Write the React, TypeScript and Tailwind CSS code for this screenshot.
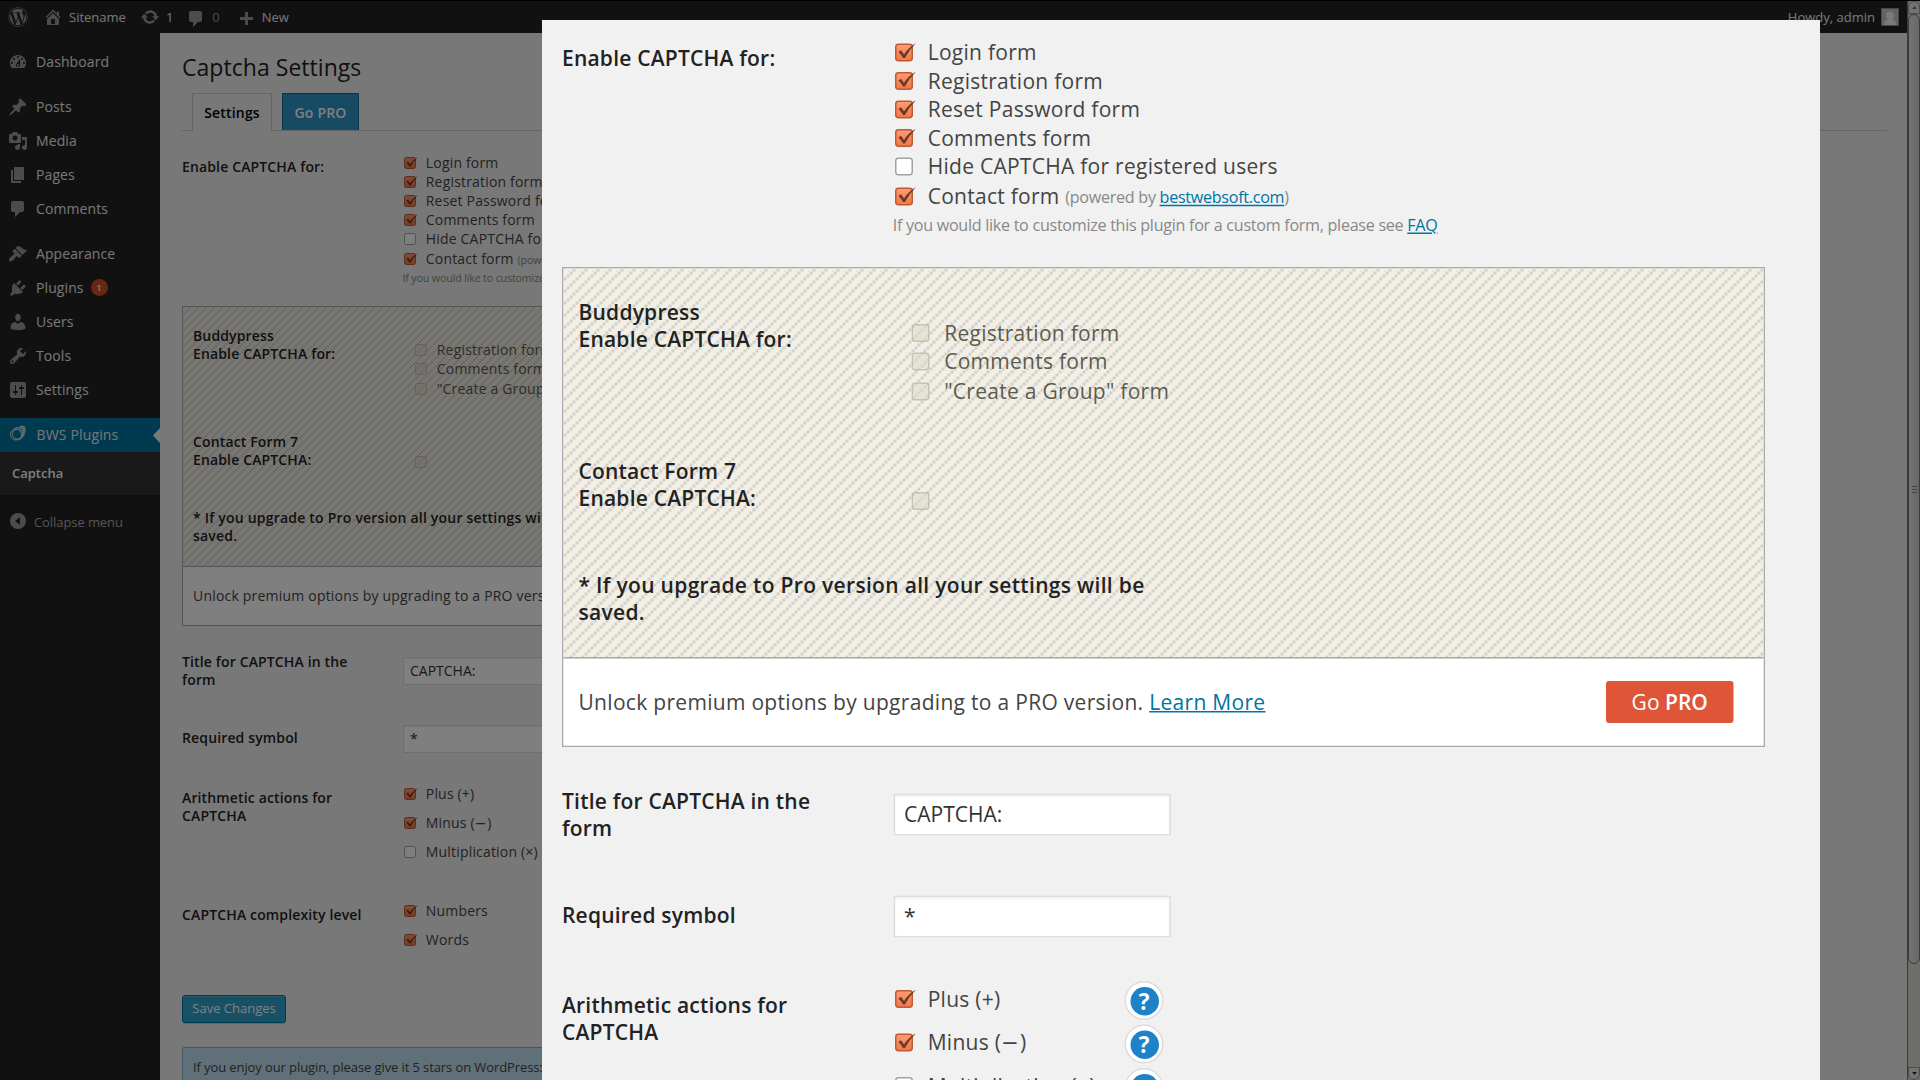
import React, { useId } from "react";
import { FaWordpress } from "react-icons/fa";

function Icon({ d, className }: { d: string; className: string }) {
  return (
    <svg viewBox="0 0 20 20" fill="currentColor" className={className}>
      <path d={d} />
    </svg>
  );
}

const icons = {
  home: "M16 8.5l1.53 1.53-1.06 1.06L10 4.6l-6.47 6.49-1.06-1.06L10 2.5l4 4v-2h2v4zm-6-2.46l6 5.99V18H4v-5.97zM12 17v-5H8v5h4z",
  update:
    "M10.2 3.28c3.53 0 6.43 2.61 6.92 6h2.08l-3.5 4-3.5-4h2.32c-.45-1.97-2.21-3.45-4.32-3.45-1.45 0-2.73.71-3.54 1.78L4.95 5.66C6.23 4.2 8.11 3.28 10.2 3.28zm-.4 13.44c-3.52 0-6.43-2.61-6.92-6H.8l3.5-4c1.17 1.33 2.33 2.67 3.5 4H5.48c.45 1.97 2.21 3.45 4.32 3.45 1.45 0 2.73-.71 3.54-1.78l1.71 1.95c-1.28 1.46-3.15 2.38-5.25 2.38z",
  comments: "M5 2h9c1.1 0 2 .9 2 2v7c0 1.1-.9 2-2 2h-2l-5 5v-5H5c-1.1 0-2-.9-2-2V4c0-1.1.9-2 2-2z",
  plus: "M17 7v3h-5v5H9v-5H4V7h5V2h3v5h5z",
  dashboard:
    "M3.76 16h12.48c1.1-1.37 1.76-3.11 1.76-5 0-4.42-3.58-8-8-8s-8 3.58-8 8c0 1.89.66 3.63 1.76 5zM10 4c.55 0 1 .45 1 1s-.45 1-1 1-1-.45-1-1 .45-1 1-1zM6 6c.55 0 1 .45 1 1s-.45 1-1 1-1-.45-1-1 .45-1 1-1zm8 0c.55 0 1 .45 1 1s-.45 1-1 1-1-.45-1-1 .45-1 1-1zm-5.37 5.55L12 7v6c0 1.1-.9 2-2 2s-2-.9-2-2c0-.57.24-1.08.63-1.45zM4 10c.55 0 1 .45 1 1s-.45 1-1 1-1-.45-1-1 .45-1 1-1zm12 0c.55 0 1 .45 1 1s-.45 1-1 1-1-.45-1-1 .45-1 1-1zm-5 3c0-.55-.45-1-1-1s-1 .45-1 1 .45 1 1 1 1-.45 1-1z",
  post: "M10.44 3.02l1.82-1.82 6.36 6.35-1.83 1.82c-1.05-.68-2.48-.57-3.41.36l-.75.75c-.92.93-1.04 2.35-.35 3.41l-1.83 1.82-2.41-2.41-2.8 2.79c-.42.42-3.38 2.71-3.8 2.29s1.86-3.39 2.28-3.81l2.79-2.79L4.1 9.36l1.83-1.82c1.05.69 2.48.57 3.4-.36l.75-.75c.93-.92 1.05-2.35.36-3.41z",
  media:
    "M13 11V4c0-.55-.45-1-1-1h-1.67L9 1H5L3.67 3H2c-.55 0-1 .45-1 1v7c0 .55.45 1 1 1h10c.55 0 1-.45 1-1zM7 4.5c1.38 0 2.5 1.12 2.5 2.5S8.38 9.5 7 9.5 4.5 8.38 4.5 7 5.62 4.5 7 4.5zM14 6h5v10.5c0 1.38-1.12 2.5-2.5 2.5S14 17.88 14 16.5s1.12-2.5 2.5-2.5c.17 0 .34.02.5.05V9h-3V6zm-4 8.05V13h2v3.5c0 1.38-1.12 2.5-2.5 2.5S7 17.88 7 16.5 8.12 14 9.5 14c.17 0 .34.02.5.05z",
  page: "M6 15V2h10v13H6zm-1 1h8v2H3V5h2v11z",
  appearance:
    "M14.48 11.06L7.41 3.99l1.5-1.5c.5-.56 2.3-.47 3.51.32 1.21.8 1.43 1.28 2.91 2.1 1.18.64 2.45 1.26 4.45.85zm-.71.71L6.7 4.7 4.93 6.47c-.39.39-.39 1.02 0 1.41l1.06 1.06c.39.39.39 1.03 0 1.42-.6.6-1.43 1.11-2.21 1.69-.35.26-.7.53-1.01.84C1.43 14.23.4 16.08 1.4 17.07c.99 1 2.84-.03 4.18-1.36.31-.31.58-.66.85-1.02.57-.78 1.08-1.61 1.69-2.21.39-.39 1.02-.39 1.41 0l1.06 1.06c.39.39 1.02.39 1.41 0z",
  plugins:
    "M13.11 4.36L9.87 7.6 8 5.73l3.24-3.24c.35-.34 1.05-.2 1.56.32.52.51.66 1.21.31 1.55zm-8 1.77l.91-1.12 9.01 9.01-1.19.84c-.71.71-2.63 1.16-3.82 1.16H6.14L4.9 17.26c-.59.59-1.54.59-2.12 0-.59-.58-.59-1.53 0-2.12l1.24-1.24v-3.88c0-1.13.4-3.19 1.09-3.89zm7.26 3.97l3.24-3.24c.34-.35 1.04-.21 1.55.31.52.51.66 1.21.31 1.55l-3.24 3.25z",
  users:
    "M10 9.25c-2.27 0-2.73-3.44-2.73-3.44C7 4.02 7.82 2 9.97 2c2.16 0 2.98 2.02 2.71 3.81 0 0-.41 3.44-2.68 3.44zm0 2.57L12.72 10c2.39 0 4.52 2.33 4.52 4.53v2.49s-3.65 1.13-7.24 1.13c-3.65 0-7.24-1.13-7.24-1.13v-2.49c0-2.25 1.94-4.48 4.47-4.48z",
  tools:
    "M16.68 9.77c-1.34 1.34-3.3 1.67-4.95.99l-5.41 6.52c-.99.99-2.59.99-3.58 0s-.99-2.59 0-3.57l6.52-5.42c-.68-1.65-.35-3.61.99-4.95 1.28-1.28 3.12-1.62 4.72-1.06l-2.89 2.89 2.82 2.82 2.86-2.87c.53 1.58.18 3.39-1.08 4.65zM3.81 16.21c.4.39 1.04.39 1.43 0 .4-.4.4-1.04 0-1.43-.39-.4-1.03-.4-1.43 0-.39.39-.39 1.03 0 1.43z",
  settings:
    "M18 16V4c0-1.1-.9-2-2-2H4c-1.1 0-2 .9-2 2v12c0 1.1.9 2 2 2h12c1.1 0 2-.9 2-2zM8 11h1c.55 0 1 .45 1 1s-.45 1-1 1H8v1.5c0 .28-.22.5-.5.5s-.5-.22-.5-.5V13H6c-.55 0-1-.45-1-1s.45-1 1-1h1V5.5c0-.28.22-.5.5-.5s.5.22.5.5V11zm5-2h-1c-.55 0-1-.45-1-1s.45-1 1-1h1V5.5c0-.28.22-.5.5-.5s.5.22.5.5V7h1c.55 0 1 .45 1 1s-.45 1-1 1h-1v5.5c0 .28-.22.5-.5.5s-.5-.22-.5-.5V9z",
};

function AdminBar() {
  return (
    <header className="flex h-8 items-center bg-[#222] pl-2 pr-2 text-[13px] text-[#eee]">
      <FaWordpress className="h-5 w-5 text-[#999]" />
      <Icon d={icons.home} className="ml-[15px] h-5 w-5 text-[#999]" />
      <span className="ml-[6px] mt-px">Sitename</span>
      <Icon d={icons.update} className="ml-[14px] h-5 w-5 text-[#999]" />
      <span className="ml-[6px] mt-px">1</span>
      <Icon d={icons.comments} className="ml-[13px] mt-[3px] h-5 w-5 text-[#999]" />
      <span className="ml-[6px] mt-px text-[#999]">0</span>
      <Icon d={icons.plus} className="ml-[16px] mt-[5px] h-5 w-5 text-[#999]" />
      <span className="ml-[6px] mt-px">New</span>
      <span className="ml-auto mt-px">Howdy, admin</span>
      <svg viewBox="0 0 18 18" className="ml-[6px] h-[18px] w-[18px]">
        <rect x="0.5" y="0.5" width="17" height="17" fill="#c8c8c8" stroke="#8c8c8c" />
        <circle cx="9" cy="7.5" r="4" fill="#f4f4f4" />
        <path d="M3 17c0-4 2.500-6 6-6s6 2 6 6z" fill="#f4f4f4" />
      </svg>
    </header>
  );
}

function MenuItem({ icon, label, badge }: { icon: string; label: string; badge?: string }) {
  return (
    <li className="flex h-[34px] items-center pb-[2px] pl-2 text-[14px] tracking-[0.1px] text-[#eee]">
      <Icon d={icon} className="mt-[2px] h-5 w-5 text-[#999]" />
      <span className="ml-2">{label}</span>
      {badge && (
        <span className="ml-[7px] mt-px flex h-[17px] w-[17px] items-center justify-center rounded-full bg-[#d54e21] text-[9px] font-semibold text-white">
          {badge}
        </span>
      )}
    </li>
  );
}

function Sidebar() {
  return (
    <nav className="w-40 shrink-0 bg-[#222] pt-3">
      <ul>
        <MenuItem icon={icons.dashboard} label="Dashboard" />
      </ul>
      <ul className="mt-[11px]">
        <MenuItem icon={icons.post} label="Posts" />
        <MenuItem icon={icons.media} label="Media" />
        <MenuItem icon={icons.page} label="Pages" />
        <MenuItem icon={icons.comments} label="Comments" />
      </ul>
      <ul className="mt-[11px]">
        <MenuItem icon={icons.appearance} label="Appearance" />
        <MenuItem icon={icons.plugins} label="Plugins" badge="1" />
        <MenuItem icon={icons.users} label="Users" />
        <MenuItem icon={icons.tools} label="Tools" />
        <MenuItem icon={icons.settings} label="Settings" />
      </ul>
      <div className="mt-[11px] flex h-[34px] items-center bg-[#0074a2] pl-[10px] text-[14px] tracking-[0.15px] text-[#eee]">
        <svg viewBox="0 0 16 17" fill="none" stroke="#dce8ee" className="mb-1 h-[17px] w-4">
          <circle cx="6" cy="9.500" r="5.500" strokeWidth="1" />
          <circle cx="7.500" cy="9" r="5" strokeWidth=".9" />
          <path d="M9.500 1.300C11.500.6 14 .8 15 2c1.300 4.500-.5 9.500-5.500 13 2.500-3 3.800-6.300 3-9C12 4 11 2.500 9.500 1.300z" fill="#dce8ee" fillOpacity=".8" strokeWidth=".5" />
          <path d="M3.500 4.500C5.500 2.300 8.500 2 11 3.500" strokeWidth="1" />
        </svg>
        <span className="-mt-[2px] ml-[10.500px]">BWS Plugins</span>
        <svg viewBox="0 0 7 15" className="ml-auto h-[15px] w-[7px]">
          <path d="M7 0v15L0 7.500z" fill="#f1f1f1" />
        </svg>
      </div>
      <div className="flex h-[43px] items-center bg-[#333] pl-3 text-[13px] font-semibold text-white">Captcha</div>
      <div className="mt-[11px] flex h-[34px] items-center pl-[10px] text-[13px] tracking-[-0.08px] text-[#aaa]">
        <svg viewBox="0 0 16 16" className="mb-[4px] h-4 w-4">
          <circle cx="8" cy="8" r="8" fill="#999" />
          <path d="M10 4v8L5 8z" fill="#222" />
        </svg>
        <span className="ml-[8px]">Collapse menu</span>
      </div>
    </nav>
  );
}

function Box({ checked = false, disabled = false }: { checked?: boolean; disabled?: boolean }) {
  const id = useId();
  return (
    <svg viewBox="0 0 15 14" className="h-[14px] w-[15px] shrink-0">
      <defs>
        <linearGradient id={id} x1="0" y1="0" x2="0" y2="1">
          <stop offset="0" stopColor="#ff9c72" />
          <stop offset="1" stopColor="#f07746" />
        </linearGradient>
      </defs>
      {disabled ? (
        <rect x="0.5" y="1.500" width="11" height="11" rx="1.800" fill="#dedac8" fillOpacity=".5" stroke="#bdbaae" strokeOpacity=".8" />
      ) : (
        <rect
          x="0.5"
          y="1.500"
          width="11"
          height="11"
          rx="1.800"
          fill={checked ? `url(#${id})` : "#fff"}
          stroke={checked ? "#bf5b33" : "#a5a29e"}
        />
      )}
      {checked && <path d="M2.300 6.600l1.700-1.100 2 2.800Q9 3.600 13.900.9 9.500 5.400 6.600 10.600H5.400Q4.300 8.600 2.300 6.600z" fill="#6b3a2a" />}
    </svg>
  );
}

function Check({ label, checked, disabled, className }: { label: React.ReactNode; checked?: boolean; disabled?: boolean; className: string }) {
  return (
    <label className={`flex items-center gap-[7px] whitespace-nowrap pl-[0.800px] tracking-[0.18px] ${className}`}>
      <Box checked={checked} disabled={disabled} />
      <span>{label}</span>
    </label>
  );
}

function Hatch() {
  const id = useId();
  return (
    <svg className="absolute inset-0 h-full w-full">
      <defs>
        <pattern id={id} width="8" height="8" patternUnits="userSpaceOnUse">
          <path d="M0 6h2v2H0zM2 4h2v2H2zM4 2h2v2H4zM6 0h2v2H6z" fill="#d0d0d2" />
        </pattern>
      </defs>
      <rect width="100%" height="100%" fill={`url(#${id})`} />
    </svg>
  );
}

function Help() {
  return (
    <span className="flex h-[26px] w-[26px] items-center justify-center rounded-full border border-[#dcdcdc] bg-white">
      <span className="flex h-[19px] w-[19px] items-center justify-center rounded-full bg-[#1e82c8] text-[15px] font-bold leading-none text-white">?</span>
    </span>
  );
}

function Field({ value }: { value: string }) {
  return (
    <div className="flex h-[28px] w-[185px] items-center border border-[#ddd] bg-white pb-[1.500px] pl-[6px] text-[#333] shadow-[inset_0_1px_2px_rgba(0,0,0,0.07)]">
      {value}
    </div>
  );
}

const heading = "font-semibold leading-[18px] tracking-[0.14px] text-[#222]";
const link = "text-[#0074a2] underline";
const hint = "text-[10.750px] tracking-[-0.190px] text-[#888]";

function SettingsForm() {
  return (
    <form className="w-[802px] text-[14px] text-[#444]">
      <section className="flex h-[162px]">
        <h3 className={`w-[221px] pt-[14px] ${heading}`}>Enable CAPTCHA for:</h3>
        <div className="pt-[9px]">
          <Check className="h-[19px]" checked label="Login form" />
          <Check className="h-[19px]" checked label="Registration form" />
          <Check className="h-[19px]" checked label="Reset Password form" />
          <Check className="h-[19px]" checked label="Comments form" />
          <Check className="h-[19px]" label="Hide CAPTCHA for registered users" />
          <Check
            className="h-[21px]"
            checked
            label={
              <>
                Contact form{" "}
                <span className={`inline-block -translate-y-[0.500px] ${hint}`}>
                  (powered by <a className={link}>bestwebsoft.com</a>)
                </span>
              </>
            }
          />
          <p className={`-ml-[0.500px] flex h-[18px] items-center whitespace-pre ${hint}`}>
            If you would like to customize this plugin for a custom form, please see <a className={link}>FAQ</a>
          </p>
        </div>
      </section>

      <section className="h-[320px] border border-[#aaa]">
        <div className="relative h-[260px] border-b border-[#aaa] bg-[#f3efe3]">
          <Hatch />
          <div className="relative pl-[10px] pt-5">
            <div className="flex h-[106px]">
              <h3 className={`w-[221px] ${heading}`}>
                Buddypress
                <br />
                Enable CAPTCHA for:
              </h3>
              <div className="pt-[13px] text-[#5c5b50] [&_svg]:mt-[1.600px]">
                <Check className="h-[19px]" disabled label="Registration form" />
                <Check className="h-[19px]" disabled label="Comments form" />
                <Check className="h-[20px]" disabled label={'"Create a Group" form'} />
              </div>
            </div>
            <div className="flex h-[76px]">
              <h3 className={`w-[221px] ${heading}`}>
                Contact Form 7
                <br />
                Enable CAPTCHA:
              </h3>
              <div className="pl-[0.800px] pt-[22px]">
                <Box disabled />
              </div>
            </div>
            <p className="w-[400px] font-semibold leading-[18px] tracking-[0.21px] text-[#222]">* If you upgrade to Pro version all your settings will be saved.</p>
          </div>
        </div>
        <div className="flex h-[58px] items-center justify-between bg-white pl-[10px] pr-[20px]">
          <span className="-mt-[1.500px] tracking-[0.2px]">
            Unlock premium options by upgrading to a PRO version. <a className={link}>Learn More</a>
          </span>
          <span className="flex h-7 w-[85px] items-center justify-center whitespace-pre rounded-[2px] bg-[#de5537] pb-px text-white">
            Go <b className="font-semibold">PRO</b>
          </span>
        </div>
      </section>

      <section className="flex h-[68px] pt-[27px]">
        <h3 className={`w-[221px] pr-[40px] ${heading}`}>Title for CAPTCHA in the form</h3>
        <div className="pt-[4px]">
          <Field value="CAPTCHA:" />
        </div>
      </section>
      <section className="flex h-[90px] pt-[31px]">
        <h3 className={`w-[221px] pt-[4px] ${heading}`}>Required symbol</h3>
        <Field value="*" />
      </section>
      <section className="flex h-[90px]">
        <h3 className={`w-[221px] pr-[40px] pt-[5px] ${heading}`}>Arithmetic actions for CAPTCHA</h3>
        <div className="-mt-[5px] w-[154px]">
          <Check className="h-[29px]" checked label="Plus (+)" />
          <Check
            className="h-[29px]"
            checked
            label={
              <>
                Minus (<span className="font-['DejaVu_Sans'] leading-none tracking-[0.8px]">−</span>)
              </>
            }
          />
          <Check className="h-[29px]" label="Multiplication (×)" />
        </div>
        <div className="-mt-[2px] flex flex-col gap-[3px]">
          <Help />
          <Help />
          <Help />
        </div>
      </section>
      <section className="flex h-[118px] pt-[22px]">
        <h3 className={`w-[221px] pt-[10px] ${heading}`}>CAPTCHA complexity level</h3>
        <div>
          <Check className="h-[29px]" checked label="Numbers" />
          <Check className="h-[29px]" checked label="Words" />
        </div>
      </section>
      <button
        type="button"
        className="mt-[3px] flex h-[28px] w-[104px] items-center justify-center rounded-[3px] border border-[#0074a2] bg-[#2ea2cc] text-[13px] text-white shadow-[inset_0_1px_0_rgba(120,200,230,0.5),0_1px_0_rgba(0,0,0,0.15)]"
      >
        Save Changes
      </button>
    </form>
  );
}

function Scrollbar() {
  return (
    <div className="flex w-[13px] shrink-0 flex-col items-center border-l border-[#777] bg-[#dcdad5]">
      <div className="flex h-[13px] w-full items-center justify-center rounded-t-full border border-[#999] bg-[#e6e6e6]">
        <svg viewBox="0 0 6 4" className="h-[3px] w-[5px]">
          <path d="M3 0l3 4H0z" fill="#666" />
        </svg>
      </div>
      <div className="flex h-[950px] w-full flex-col items-center justify-center gap-[2px] rounded-full border border-[#777] bg-linear-to-r from-[#e8e8e8] to-[#cfcdc9]">
        <i className="h-px w-[5px] bg-[#888]" />
        <i className="h-px w-[5px] bg-[#888]" />
        <i className="h-px w-[5px] bg-[#888]" />
      </div>
      <div className="mt-auto flex h-[13px] w-full items-center justify-center rounded-b-full border border-[#999] bg-[#e6e6e6]">
        <svg viewBox="0 0 6 4" className="h-[3px] w-[5px]">
          <path d="M3 4l3-4H0z" fill="#222" />
        </svg>
      </div>
    </div>
  );
}

export default function App() {
  return (
    <div className="relative flex h-[1080px] w-[1920px] overflow-hidden bg-black pt-px font-['Open_Sans','Noto_Sans',sans-serif]">
      <div className="flex h-[1079px] min-w-0 flex-1 flex-col">
        <AdminBar />
        <div className="flex min-h-0 flex-1">
          <Sidebar />
          <main className="min-w-0 flex-1 overflow-hidden bg-[#f1f1f1] pl-[22px] pr-5">
            <h1 className="h-[60px] pt-[18px] text-[23px] leading-[32px] tracking-[0.04px] text-[#222]">Captcha Settings</h1>
            <div className="flex h-[38px] items-end border-b border-[#ccc] pl-[10px] text-[14px] font-semibold tracking-[0.18px]">
              <div className="-mb-px flex h-[38px] w-[80px] items-center justify-center border border-b-0 border-[#ccc] bg-[#f1f1f1] text-black">Settings</div>
              <div className="ml-[10px] flex h-[37px] w-[77px] items-center justify-center border border-b-0 border-[#14668f] bg-[#2d97c6] text-white">Go PRO</div>
            </div>
            <div className="pt-[13px]">
              <SettingsForm />
              <div className="mt-[24px] h-20 w-[802px] rounded-[2px] border border-[#7ab4d4] bg-[#c0e0f0] pl-[10px] pt-[9px] text-[13px] leading-[20px] tracking-[-0.1px] text-[#444]">
                If you enjoy our plugin, please give it 5 stars on WordPress: <a className={link}>Rate the plugin</a>
              </div>
            </div>
          </main>
        </div>
      </div>
      <Scrollbar />

      <div className="absolute inset-0 bg-black/50" />
      <div role="dialog" className="absolute left-[542px] top-5 h-[1060px] w-[1278px] overflow-hidden bg-[#f1f1f1] pl-5 pt-1">
        <div className="w-[802px] origin-top-left scale-150">
          <SettingsForm />
        </div>
      </div>
    </div>
  );
}
